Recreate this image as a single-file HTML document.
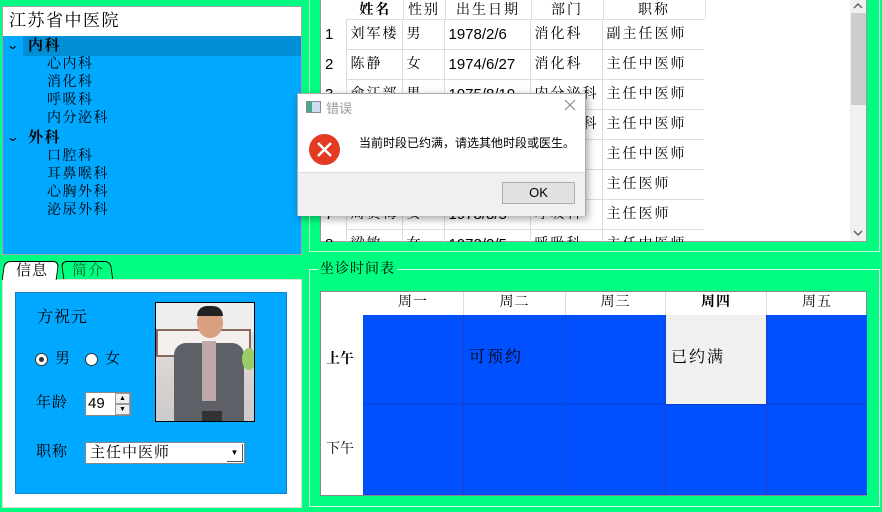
<!DOCTYPE html>
<html><head><meta charset="utf-8"><style>
*{margin:0;padding:0;box-sizing:border-box}
body{width:882px;height:512px;background:#00ff80;position:relative;overflow:hidden;font-family:"Liberation Serif","Noto Serif CJK SC",serif;color:#000}
.a{position:absolute}
.t{font-size:14px;line-height:18px;white-space:nowrap}
.tr .t{letter-spacing:1.5px}
table{border-collapse:collapse}
.d td{border:1px solid #ddd;padding-left:4px;letter-spacing:2px;white-space:nowrap;overflow:hidden}
.d td:first-child{border:none;padding-left:5px;letter-spacing:0}
.n{font-family:'Liberation Sans';letter-spacing:0!important;font-size:15px}
</style></head><body>
<!-- tree -->
<div class="a" style="left:2px;top:6px;width:300px;height:249px;background:#00a8ff;border:1px solid #9aa"></div>
<div class="a" style="left:3px;top:7px;width:298px;height:29px;background:#fff"></div>
<div class="a t" style="left:9px;top:11px;font-size:17px;line-height:20px;letter-spacing:1.5px">江苏省中医院</div>
<div class="a" style="left:23px;top:36px;width:278px;height:20px;background:#008fd6"></div>
<div class="tr">
<div class="a t" style="left:8px;top:36px;font-size:12px;font-family:'DejaVu Sans',sans-serif;transform:scaleX(1.3)">⌄</div>
<div class="a t" style="left:28px;top:37px;font-weight:bold;font-size:15px">内科</div>
<div class="a t" style="left:47px;top:56px">心内科</div>
<div class="a t" style="left:47px;top:74px">消化科</div>
<div class="a t" style="left:47px;top:92px">呼吸科</div>
<div class="a t" style="left:47px;top:110px">内分泌科</div>
<div class="a t" style="left:8px;top:128px;font-size:12px;font-family:'DejaVu Sans',sans-serif;transform:scaleX(1.3)">⌄</div>
<div class="a t" style="left:28px;top:129px;font-weight:bold;font-size:15px">外科</div>
<div class="a t" style="left:47px;top:148px">口腔科</div>
<div class="a t" style="left:47px;top:166px">耳鼻喉科</div>
<div class="a t" style="left:47px;top:184px">心胸外科</div>
<div class="a t" style="left:47px;top:202px">泌尿外科</div>
</div>

<!-- table -->
<div class="a" style="left:309px;top:0;width:571px;height:252px;border:1px solid #c8f0d8;border-top:none"></div>
<div class="a" style="left:320px;top:0;width:547px;height:242px;background:#fff;border:1px solid #999;border-top:none;overflow:hidden">
<table style="font-size:14px;position:absolute;left:0;top:-1px;letter-spacing:2px">
<colgroup><col style="width:27px"><col style="width:55px"><col style="width:42px"><col style="width:86px"><col style="width:72px"><col style="width:102px"></colgroup>
<tr style="height:20px;text-align:center"><td></td><td style="font-weight:bold;border-right:1px solid #ddd">姓名</td><td style="border-right:1px solid #ddd">性别</td><td style="border-right:1px solid #ddd">出生日期</td><td style="border-right:1px solid #ddd">部门</td><td style="border-right:1px solid #ddd">职称</td></tr>
</table>
</div>
<div class="a" style="left:320px;top:19px;width:384px;height:223px;overflow:hidden">
<table class="d" style="font-size:14px;width:384px;table-layout:fixed">
<colgroup><col style="width:26px"><col style="width:56px"><col style="width:42px"><col style="width:86px"><col style="width:72px"><col style="width:102px"></colgroup>
<tbody style="line-height:29px">
<tr><td class="n">1</td><td>刘军楼</td><td>男</td><td class="n">1978/2/6</td><td>消化科</td><td>副主任医师</td></tr>
<tr><td class="n">2</td><td>陈静</td><td>女</td><td class="n">1974/6/27</td><td>消化科</td><td>主任中医师</td></tr>
<tr><td class="n">3</td><td>俞江部</td><td>男</td><td class="n">1975/8/19</td><td>内分泌科</td><td>主任中医师</td></tr>
<tr><td class="n">4</td><td>王国</td><td>男</td><td class="n">1970/3/1</td><td>内分泌科</td><td>主任中医师</td></tr>
<tr><td class="n">5</td><td>李明</td><td>男</td><td class="n">1972/5/3</td><td>心内科</td><td>主任中医师</td></tr>
<tr><td class="n">6</td><td>张华</td><td>女</td><td class="n">1976/4/2</td><td>心内科</td><td>主任医师</td></tr>
<tr><td class="n">7</td><td>周贡梅</td><td>女</td><td class="n">1978/8/5</td><td>呼吸科</td><td>主任医师</td></tr>
<tr><td class="n">8</td><td>梁敏</td><td>女</td><td class="n">1973/2/5</td><td>呼吸科</td><td>主任中医师</td></tr>
</tbody></table></div>
<!-- scrollbar -->
<div class="a" style="left:850px;top:0;width:16px;height:241px;background:#f0f0f0"></div>
<div class="a" style="left:851px;top:13px;width:15px;height:92px;background:#cdcdcd"></div>
<svg class="a" style="left:852px;top:2px" width="12" height="8"><path d="M2 6L6 2L10 6" stroke="#555" fill="none" stroke-width="1.3"/></svg>
<svg class="a" style="left:852px;top:229px" width="12" height="8"><path d="M2 2L6 6L10 2" stroke="#555" fill="none" stroke-width="1.3"/></svg>

<!-- tabs -->
<div class="a" style="left:2px;top:279px;width:300px;height:229px;background:#fff;border:1px solid #ddd"></div>
<div class="a" style="left:3px;top:261px;width:55px;height:19px;background:#fff;border:1px solid #000;border-bottom:none;border-radius:6px 6px 0 0;transform:skewX(-8deg)"></div>
<div class="a t" style="left:16px;top:262px;font-size:15px;letter-spacing:1px">信息</div>
<div class="a" style="left:62px;top:261px;width:50px;height:18px;border:1px solid #000;border-bottom:none;border-radius:6px 6px 0 0;transform:skewX(8deg)"></div>
<div class="a t" style="left:72px;top:262px;font-size:15px;color:#063;letter-spacing:1px">简介</div>
<div class="a" style="left:15px;top:292px;width:272px;height:202px;background:#00a8ff;border:1px solid #1a7fc0"></div>
<div class="a t" style="left:37px;top:308px;font-size:16px;line-height:20px;letter-spacing:1px">方祝元</div>
<div class="a" style="left:155px;top:302px;width:100px;height:120px;border:1px solid #000;background:linear-gradient(#eee 0,#eee 25%,#e4e0dc 25%,#d8d0cc 70%,#ccc 100%);overflow:hidden">
 <div class="a" style="left:0;top:26px;width:95px;height:28px;border:2px solid #8a6a60;background:#f4f0ee"></div>
 <div class="a" style="left:41px;top:5px;width:26px;height:30px;border-radius:50%;background:#d8a080"></div>
 <div class="a" style="left:41px;top:3px;width:26px;height:10px;border-radius:10px 10px 0 0;background:#222"></div>
 <div class="a" style="left:18px;top:40px;width:70px;height:90px;background:#5e6068;border-radius:12px 12px 0 0"></div>
 <div class="a" style="left:46px;top:38px;width:14px;height:60px;background:#c0a8a8"></div>
 <div class="a" style="left:46px;top:108px;width:20px;height:12px;background:#333"></div>
 <div class="a" style="left:86px;top:45px;width:14px;height:22px;background:#9c6;border-radius:50%"></div>
</div>
<div class="a" style="left:35px;top:353px;width:13px;height:13px;border-radius:50%;background:#fff;border:1px solid #333"></div>
<div class="a" style="left:39px;top:357px;width:5px;height:5px;border-radius:50%;background:#333"></div>
<div class="a t" style="left:55px;top:350px;font-size:15px">男</div>
<div class="a" style="left:85px;top:353px;width:13px;height:13px;border-radius:50%;background:#fff;border:1px solid #333"></div>
<div class="a t" style="left:105px;top:350px;font-size:15px">女</div>
<div class="a t" style="left:36px;top:394px;font-size:15px;letter-spacing:1px">年龄</div>
<div class="a" style="left:85px;top:392px;width:46px;height:24px;background:#fff;border:1px solid #888"></div>
<div class="a t" style="left:88px;top:395px;font-size:15px;font-family:'Liberation Sans'">49</div>
<div class="a" style="left:115px;top:393px;width:15px;height:11px;background:#f0f0f0;border:1px solid #999;font-size:7px;text-align:center;line-height:9px">▲</div>
<div class="a" style="left:115px;top:404px;width:15px;height:11px;background:#f0f0f0;border:1px solid #999;font-size:7px;text-align:center;line-height:9px">▼</div>
<div class="a t" style="left:36px;top:443px;font-size:15px;letter-spacing:1px">职称</div>
<div class="a" style="left:85px;top:442px;width:160px;height:22px;background:#fff;border:1px solid #888"></div>
<div class="a t" style="left:90px;top:444px;font-size:15px;letter-spacing:1px">主任中医师</div>
<div class="a" style="left:227px;top:444px;width:16px;height:18px;border-right:1px solid #555;border-bottom:1px solid #555;font-size:8px;line-height:18px;text-align:center">▼</div>

<!-- schedule -->
<div class="a" style="left:309px;top:269px;width:571px;height:238px;border:1px solid #e0f0e8"></div>
<div class="a t" style="left:318px;top:261px;background:#00ff80;padding:0 2px;font-size:14px;letter-spacing:1px">坐诊时间表</div>
<div class="a" style="left:320px;top:291px;width:547px;height:205px;background:#fff;border:1px solid #888"></div>
<div class="a" style="left:363px;top:315px;width:504px;height:180px;background:#0050ff"></div>
<div class="a" style="left:666px;top:315px;width:100px;height:89px;background:#f0f0f0"></div>
<div class="a" style="left:363px;top:404px;width:504px;height:1px;background:#0a44cc"></div>
<div class="a" style="left:463px;top:292px;width:1px;height:203px;background:#1a44c0"></div>
<div class="a" style="left:565px;top:292px;width:1px;height:203px;background:#1a44c0"></div>
<div class="a" style="left:665px;top:292px;width:1px;height:203px;background:#1a44c0"></div>
<div class="a" style="left:766px;top:292px;width:1px;height:203px;background:#1a44c0"></div>
<div class="a" style="left:463px;top:292px;width:1px;height:23px;background:#ddd"></div>
<div class="a" style="left:565px;top:292px;width:1px;height:23px;background:#ddd"></div>
<div class="a" style="left:665px;top:292px;width:1px;height:23px;background:#ddd"></div>
<div class="a" style="left:766px;top:292px;width:1px;height:23px;background:#ddd"></div>
<div class="a t" style="left:363px;top:294px;width:100px;text-align:center;letter-spacing:1px">周一</div>
<div class="a t" style="left:464px;top:294px;width:101px;text-align:center;letter-spacing:1px">周二</div>
<div class="a t" style="left:566px;top:294px;width:99px;text-align:center;letter-spacing:1px">周三</div>
<div class="a t" style="left:666px;top:294px;width:100px;text-align:center;font-weight:bold;letter-spacing:1px">周四</div>
<div class="a t" style="left:767px;top:294px;width:100px;text-align:center;letter-spacing:1px">周五</div>
<div class="a t" style="left:326px;top:351px;font-weight:bold">上午</div>
<div class="a t" style="left:326px;top:441px">下午</div>
<div class="a t" style="left:469px;top:349px;font-size:16px;letter-spacing:2px">可预约</div>
<div class="a t" style="left:671px;top:349px;font-size:16px;letter-spacing:2px">已约满</div>

<!-- dialog -->
<div class="a" style="left:297px;top:93px;width:289px;height:123px;background:#fff;border:1px solid #aaa;box-shadow:2px 3px 8px rgba(0,0,0,.35);font-family:'Liberation Sans','Noto Sans CJK SC',sans-serif">
 <div class="a" style="left:8px;top:7px;width:15px;height:12px;border:1px solid #889;background:linear-gradient(90deg,#4a8 0,#4a8 40%,#cde 40%)"></div>
 <div class="a" style="left:28px;top:4px;font-size:13px;color:#999">错误</div>
 <svg class="a" style="left:266px;top:5px" width="12" height="12"><path d="M1 1L11 11M11 1L1 11" stroke="#888" stroke-width="1.1"/></svg>
 <div class="a" style="left:11px;top:40px;width:31px;height:31px;border-radius:50%;background:#e53a22"></div>
 <svg class="a" style="left:11px;top:40px" width="31" height="31"><path d="M9 9L22 22M22 9L9 22" stroke="#fff" stroke-width="2.5"/></svg>
 <div class="a" style="left:61px;top:40px;font-size:12px;white-space:nowrap">当前时段已约满，请选其他时段或医生。</div>
 <div class="a" style="left:0;top:78px;width:287px;height:44px;background:#f0f0f0;border-top:1px solid #ddd"></div>
 <div class="a" style="left:204px;top:88px;width:73px;height:22px;background:#e1e1e1;border:1px solid #adadad;text-align:center;font-size:13px;line-height:20px">OK</div>
</div>
</body></html>
